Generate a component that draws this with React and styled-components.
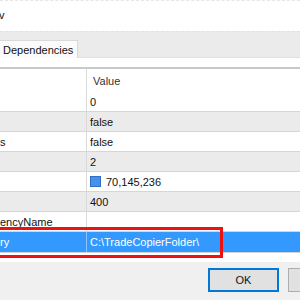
import React from 'react';
import styled, { createGlobalStyle } from 'styled-components';

const GlobalStyle = createGlobalStyle`
  html, body {
    margin: 0;
    padding: 0;
    background: #ffffff;
  }
  body {
    font-family: "Liberation Sans", Arial, sans-serif;
    font-size: 11px;
    color: #111;
  }
`;

const rows = [
  { name: '', value: '0' },
  { name: '', value: 'false' },
  { name: 's', value: 'false' },
  { name: '', value: '2' },
  { name: '', value: '70,145,236', swatch: 'rgb(70,145,236)' },
  { name: '', value: '400' },
  { name: 'encyName', value: '' },
  { name: 'ry', value: 'C:\\TradeCopierFolder\\', selected: true },
];

export default function App() {
  return (
    <>
      <GlobalStyle />
      <Window>
        <TitleArea>
          <Caption>v</Caption>
        </TitleArea>
        <TabStrip>
          <Tab>Dependencies</Tab>
        </TabStrip>
        <TabPage>
          <Grid>
            <HeaderRow>
              <NameCell />
              <HeaderCell>Value</HeaderCell>
            </HeaderRow>
            {rows.map((r, i) => (
              <Row key={i} $alt={i % 2 === 1} $selected={r.selected}>
                <NameCell $selected={r.selected}>{r.name}</NameCell>
                <ValueCell>
                  {r.swatch && <Swatch style={{ background: r.swatch }} />}
                  {r.value}
                </ValueCell>
              </Row>
            ))}
          </Grid>
        </TabPage>
        <Footer>
          <Button $primary>OK</Button>
          <Button aria-label="Cancel" />
        </Footer>
        <Marker />
      </Window>
    </>
  );
}

const Window = styled.div`
  position: relative;
  width: 300px;
  height: 300px;
  overflow: hidden;
  display: flex;
  flex-direction: column;
`;

const TitleArea = styled.div`
  height: 31px;
  box-sizing: border-box;
  border-top: 1px dashed #e6e6e6;
  padding-top: 8px;
  background: #fff;
`;

const Caption = styled.span`
  display: block;
  margin-left: -1px;
`;

const TabStrip = styled.div`
  height: 27px;
  box-sizing: border-box;
  background: #ebebeb;
  border-top: 1px dashed #e2e2e2;
  border-bottom: 1px solid #e0e0e0;
  display: flex;
  align-items: flex-end;
`;

const Tab = styled.div`
  height: 18px;
  box-sizing: border-box;
  margin-left: -4px;
  margin-bottom: -1px;
  padding: 3px 4px 0 6px;
  background: #fbfbfb;
  border: 1px solid #d9d9d9;
  border-bottom: none;
  line-height: 13px;
`;

const TabPage = styled.div`
  background: #fff;
  padding: 9px 0;
`;

const Grid = styled.div`
  border-top: 2px solid #c6cacd;
  border-bottom: 1px solid #d3d3d3;
  display: flex;
  flex-direction: column;
`;

const HeaderRow = styled.div`
  display: grid;
  grid-template-columns: 87px 1fr;
  height: 23px;
`;

const Row = styled.div`
  display: grid;
  grid-template-columns: 87px 1fr;
  height: 20px;
  box-sizing: border-box;
  border-bottom: 1px solid #d6d6d6;
  background: ${(p) => (p.$selected ? '#3399ff' : p.$alt ? '#ebebeb' : '#fff')};
  color: ${(p) => (p.$selected ? '#fff' : '#111')};
  &:last-child {
    border-bottom: none;
  }
`;

const NameCell = styled.div`
  border-right: 1px solid ${(p) => (p.$selected ? '#8fc4fb' : '#d9d9d9')};
  padding-left: 0;
  display: flex;
  align-items: center;
  white-space: nowrap;
  overflow: hidden;
`;

const ValueCell = styled.div`
  display: flex;
  align-items: center;
  padding-left: 3px;
  white-space: nowrap;
`;

const HeaderCell = styled.div`
  display: flex;
  align-items: center;
  padding-left: 6px;
  color: #333;
`;

const Swatch = styled.span`
  width: 9px;
  height: 9px;
  border: 1px solid #2f6fbf;
  margin-right: 5px;
  flex: none;
`;

const Footer = styled.div`
  flex: 1;
  background: #f0f0f0;
  display: flex;
  align-items: flex-start;
  gap: 9px;
  padding: 6px 0 0 208px;
`;

const Button = styled.div`
  flex: none;
  width: 71px;
  height: 24px;
  box-sizing: border-box;
  background: #e1e1e1;
  border: ${(p) => (p.$primary ? '2px solid #0078d7' : '1px solid #adadad')};
  display: flex;
  align-items: center;
  justify-content: center;
  color: #111;
`;

const Marker = styled.div`
  position: absolute;
  left: -10px;
  top: 227px;
  width: 233px;
  height: 31px;
  box-sizing: border-box;
  border: 3px solid #ee1111;
  pointer-events: none;
`;
